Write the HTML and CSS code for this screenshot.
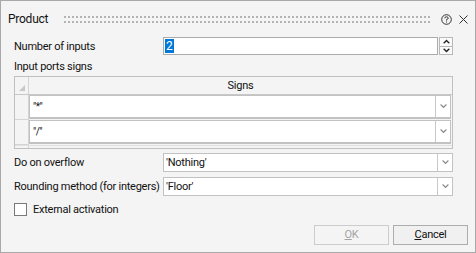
FILE: index.html
```html
<!DOCTYPE html>
<html>
<head>
<meta charset="utf-8">
<link rel="stylesheet" href="styles.css">
</head>
<body>
<div class="dialog">
  <div class="titlebar">
    <span class="title">Product</span>
    <div class="grip"></div>
    <svg class="help" width="11" height="11" viewBox="0 0 11 11"><circle cx="5.5" cy="5.5" r="4.8" fill="none" stroke="#333" stroke-width="1"/><path d="M3.8 4.3 Q3.8 2.8 5.5 2.8 Q7.2 2.8 7.2 4.2 Q7.2 5.2 5.5 5.6 L5.5 6.6" fill="none" stroke="#333" stroke-width="1"/><rect x="5" y="7.5" width="1" height="1" fill="#333"/></svg>
    <svg class="close" width="9" height="9" viewBox="0 0 9 9"><path d="M0.5 0.5 L8.5 8.5 M8.5 0.5 L0.5 8.5" stroke="#333" stroke-width="1"/></svg>
  </div>
  <div class="content">
    <div class="row row-num">
      <span class="label">Number of inputs</span>
      <div class="textbox"><span class="sel">2</span></div>
      <div class="spinner">
        <div class="spin-btn"><svg width="7" height="5" viewBox="0 0 7 5"><path d="M0 4 L3.5 0.5 L7 4 L5.5 4.5 L3.5 2.5 L1.5 4.5 Z" fill="#222"/></svg></div>
        <div class="spin-btn"><svg width="7" height="5" viewBox="0 0 7 5"><path d="M0 1 L3.5 4.5 L7 1 L5.5 0.5 L3.5 2.5 L1.5 0.5 Z" fill="#222"/></svg></div>
      </div>
    </div>
    <div class="section-label">Input ports signs</div>
    <div class="grid">
      <div class="grid-head">
        <div class="corner"><svg width="6" height="6" viewBox="0 0 6 6"><path d="M6 0 L6 6 L0 6 Z" fill="#c8c8c8"/></svg></div>
        <div class="col-head">Signs</div>
      </div>
      <div class="grid-row">
        <div class="row-head"></div>
        <div class="cell-combo"><span class="combo-text small">"*"</span><div class="drop"><svg width="7" height="5" viewBox="0 0 7 5"><path d="M0 0.8 L3.5 4.3 L7 0.8 L5.7 0.3 L3.5 2.5 L1.3 0.3 Z" fill="#8a8a8a"/></svg></div></div>
      </div>
      <div class="grid-row">
        <div class="row-head"></div>
        <div class="cell-combo"><span class="combo-text small">"/"</span><div class="drop"><svg width="7" height="5" viewBox="0 0 7 5"><path d="M0 0.8 L3.5 4.3 L7 0.8 L5.7 0.3 L3.5 2.5 L1.3 0.3 Z" fill="#8a8a8a"/></svg></div></div>
      </div>
      <div class="grid-foot"><div class="foot-head"></div></div>
    </div>
    <div class="row row-combo first">
      <span class="label">Do on overflow</span>
      <div class="combo"><span class="combo-text">'Nothing'</span><div class="drop"><svg width="7" height="5" viewBox="0 0 7 5"><path d="M0 0.8 L3.5 4.3 L7 0.8 L5.7 0.3 L3.5 2.5 L1.3 0.3 Z" fill="#8a8a8a"/></svg></div></div>
    </div>
    <div class="row row-combo">
      <span class="label">Rounding method (for integers)</span>
      <div class="combo"><span class="combo-text">'Floor'</span><div class="drop"><svg width="7" height="5" viewBox="0 0 7 5"><path d="M0 0.8 L3.5 4.3 L7 0.8 L5.7 0.3 L3.5 2.5 L1.3 0.3 Z" fill="#8a8a8a"/></svg></div></div>
    </div>
    <div class="check-row">
      <span class="checkbox"></span>
      <span class="check-label">External activation</span>
    </div>
  </div>
  <div class="buttons">
    <div class="btn btn-ok"><u>O</u>K</div>
    <div class="btn btn-cancel"><u>C</u>ancel</div>
  </div>
</div>
</body>
</html>
```
FILE: styles.css
```css
* { box-sizing: border-box; }
html, body { margin: 0; padding: 0; }
body {
  font-family: Roboto, "Liberation Sans", sans-serif;
  font-size: 11px;
  letter-spacing: -0.25px;
  color: #111;
  background: #f4f4f4;
  white-space: nowrap;
}
.dialog {
  width: 476px;
  height: 253px;
  border: 1px solid #a9a9a9;
  background: #f4f4f4;
  display: flex;
  flex-direction: column;
}
.titlebar {
  height: 30px;
  display: flex;
  align-items: center;
  padding-left: 7px;
  padding-top: 6px;
}
.title {
  font-size: 12px;
  color: #111;
  width: 56px;
}
.grip {
  width: 366px;
  height: 7px;
  background-image:
    linear-gradient(180deg, transparent 0 2px, #f4f4f4 2px 5px, transparent 5px 7px),
    linear-gradient(90deg, #b4b4b4 0 2px, transparent 2px 4px);
  background-size: 100% 7px, 4px 7px;
}
.help { margin-left: 11px; }
.close { margin-left: 7px; }
.content {
  margin: 6px 22px 0 13px;
  display: flex;
  flex-direction: column;
}
.row { display: flex; align-items: center; }
.label { width: 149px; flex: none; }
.row-num { height: 18px; }
.textbox {
  width: 276px;
  height: 18px;
  background: #fff;
  border: 1px solid #ababab;
  padding: 1px 0 0 1px;
}
.sel {
  display: inline-block;
  background: #0078d7;
  color: #fff;
  height: 14px;
  line-height: 14px;
  padding: 0 1px;
  font-size: 12px;
}
.spinner {
  margin-left: 1px;
  width: 14px;
  height: 18px;
  display: flex;
  flex-direction: column;
}
.spin-btn {
  flex: 1;
  border: 1px solid #b8b8b8;
  background: #fafafa;
  display: flex;
  align-items: center;
  justify-content: center;
}
.spin-btn + .spin-btn { border-top: none; }
.section-label {
  margin-top: 4px;
  height: 17px;
  line-height: 15px;
}
.grid {
  height: 73px;
  border: 1px solid #c0c0c0;
  background: #f4f4f4;
  display: flex;
  flex-direction: column;
}
.grid-head { display: flex; height: 18px; border-bottom: 1px solid #c8c8c8; }
.corner {
  width: 14px;
  border-right: 1px solid #d4d4d4;
  display: flex;
  align-items: flex-end;
  justify-content: flex-end;
  padding: 0 3px 3px 0;
}
.col-head { flex: 1; text-align: center; line-height: 18px; }
.grid-row { display: flex; height: 25px; }
.row-head {
  width: 14px;
  border-right: 1px solid #d4d4d4;
  border-bottom: 1px solid #d4d4d4;
}
.cell-combo {
  flex: 1;
  height: 24px;
  margin-right: 1px;
  background: #fff;
  border: 1px solid #c2c2c2;
  border-width: 1px 1px 2px 1px;
  display: flex;
  align-items: center;
}
.combo-text { flex: 1; padding-left: 3px; }
.combo-text.small { font-size: 10px; letter-spacing: -0.5px; }
.drop {
  width: 15px;
  align-self: stretch;
  border-left: 1px solid #c8c8c8;
  display: flex;
  align-items: center;
  justify-content: center;
}
.grid-foot { flex: 1; display: flex; border-top: 1px solid #e0e0e0; }
.foot-head { width: 14px; border-right: 1px solid #d4d4d4; }
.row-combo { height: 19px; margin-top: 5px; }
.row-combo.first { margin-top: 4px; }
.combo {
  flex: 1;
  height: 19px;
  background: #fff;
  border: 1px solid #c2c2c2;
  display: flex;
  align-items: center;
}
.combo .combo-text { padding-left: 2px; }
.check-row {
  margin-top: 7px;
  height: 13px;
  display: flex;
  align-items: center;
}
.checkbox {
  width: 13px;
  height: 13px;
  border: 1px solid #7a7a7a;
  background: #fff;
}
.check-label { margin-left: 6px; }
.buttons {
  margin-top: 9px;
  margin-right: 7px;
  display: flex;
  justify-content: flex-end;
  gap: 4px;
}
.btn {
  width: 75px;
  height: 20px;
  line-height: 18px;
  text-align: center;
  border: 1px solid #adadad;
  background: #f4f4f4;
}
.btn-ok { color: #a3a3a3; border-color: #cccccc; }
.btn-cancel { background: #f0f0f0; }
```
